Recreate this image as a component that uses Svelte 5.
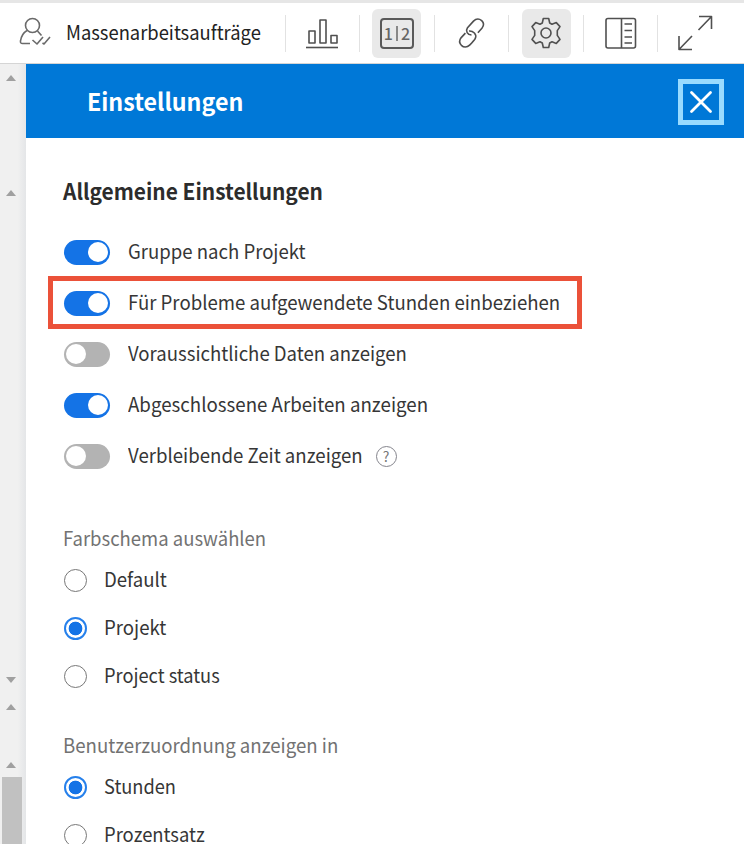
<script>
  let toggles = $state([
    { label: 'Gruppe nach Projekt', on: true, width: 178 },
    { label: 'Für Probleme aufgewendete Stunden einbeziehen', on: true, width: 432, marked: true },
    { label: 'Voraussichtliche Daten anzeigen', on: false, width: 279 },
    { label: 'Abgeschlossene Arbeiten anzeigen', on: true, width: 300 },
    { label: 'Verbleibende Zeit anzeigen', on: false, width: 235, help: true },
  ]);
  let groups = $state([
    {
      title: 'Farbschema auswählen', width: 203, selected: 'Projekt',
      options: [
        { label: 'Default', width: 63 },
        { label: 'Projekt', width: 62 },
        { label: 'Project status', width: 116 },
      ],
    },
    {
      title: 'Benutzerzuordnung anzeigen in', width: 275, selected: 'Stunden',
      options: [
        { label: 'Stunden', width: 72 },
        { label: 'Prozentsatz', width: 101 },
      ],
    },
  ]);

  // Condenses a label horizontally so that it takes exactly the given width.
  function fit(node, width) {
    const natural = node.offsetWidth;
    node.style.transform = `scaleX(${width / natural})`;
    node.style.marginRight = `${width - natural}px`;
  }
</script>

<div class="app">
  <header class="toolbar">
    <div class="bulk">
      <svg width="34" height="34" viewBox="0 0 34 34">
        <circle cx="15.5" cy="9.5" r="7" />
        <path d="M10 14.5C6 17 4 21 3.500 25q-.4 2.500 2 2.500h7.500M20.500 15l4 4.500" />
        <path d="M15.500 24l4.500 4 6-7M25.500 27l1.500 1 6-7" />
      </svg>
      <span class="text" use:fit={195}>Massenarbeitsaufträge</span>
    </div>
    <div class="tool"><svg width="34" height="34" viewBox="0 0 34 34"><path d="M1 31.500h32" /><path d="M4 15h6v12H4zM15 4h6v23h-6zM26 19.500h6V27h-6z" /></svg></div>
    <div class="tool"><div class="active"><div class="numbers"><span>1</span><i></i><span>2</span></div></div></div>
    <div class="tool">
      <svg class="link" width="34" height="34" viewBox="0 0 34 34">
        <path d="M18.500 19c-4-.2-6.300-4-4-7.200l6-6.700c2.600-2.600 5.800-2.500 8.200-.5 2.300 2.200 2 5.400.2 7.700l-4 4.400" />
        <path d="M16 15c4-.4 8.200 3.500 6.300 7.300-.7 1.500-4.300 5.400-5.700 6.800-2.600 2.500-6 2.300-8.200.2-2.300-2.300-2.100-5.200-.2-7.700l4.200-4.500" />
      </svg>
    </div>
    <div class="tool"><div class="active">
      <svg width="34" height="34" viewBox="0 0 34 34">
        <path d="M14.300 2.500h5.400l1 4.500 2.300 1.200 4.300-1.600 3.700 4-2.700 4v4.800l2.700 4-3.700 4-4.300-1.600-2.300 1.200-1 4.500h-5.400l-1-4.500L11 25.800l-4.300 1.600-3.700-4 2.700-4v-4.800l-2.700-4 3.700-4L11 8.200 13.300 7z" />
        <circle cx="17" cy="17" r="5" />
      </svg>
    </div></div>
    <div class="tool"><svg width="34" height="34" viewBox="0 0 34 34"><rect x="2" y="2.500" width="29.500" height="29.500" rx="2" /><path d="M17.500 2.500V32M20.500 8H28M20.500 14.500H28M20.500 21H28M20.500 27H28" /></svg></div>
    <div class="tool"><svg width="36" height="36" viewBox="0 0 36 36"><path d="M21.500 15L34.500 1.500M22 1.500h12.500v12.500M15 21L2 34.500M2 21v13.500h13" /></svg></div>
  </header>

  <div class="body">
    <aside class="rail">
      <i class="up first"></i>
      <i class="up second"></i>
      <i class="down"></i>
      <i class="up third"></i>
      <i class="up fourth"></i>
      <div class="thumb"></div>
    </aside>
    <main class="panel">
      <div class="title">
        <h1><span class="text" use:fit={156}>Einstellungen</span></h1>
        <button class="close" aria-label="Schließen"><svg width="24" height="24" viewBox="0 0 24 24"><path d="M2.500 2.500l19 19M21.500 2.500l-19 19" /></svg></button>
      </div>
      <div class="content">
        <h2><span class="text" use:fit={260}>Allgemeine Einstellungen</span></h2>
        <div class="toggles">
          {#each toggles as t}
            <div class="row" class:marked={t.marked}>
              <button class="switch" class:on={t.on} role="switch" aria-checked={t.on} aria-label={t.label} onclick={() => (t.on = !t.on)}><i></i></button>
              <span class="text" use:fit={t.width}>{t.label}</span>
              {#if t.help}<span class="help">?</span>{/if}
            </div>
          {/each}
        </div>
        {#each groups as g}
          <section>
            <h3><span class="text" use:fit={g.width}>{g.title}</span></h3>
            {#each g.options as o}
              <div class="option">
                <button class="radio" class:on={g.selected === o.label} role="radio" aria-checked={g.selected === o.label} aria-label={o.label} onclick={() => (g.selected = o.label)}></button>
                <span class="text" use:fit={o.width}>{o.label}</span>
              </div>
            {/each}
          </section>
        {/each}
      </div>
    </main>
  </div>
</div>

<style>
  :global(body) { margin: 0; overflow: hidden; }
  .app {
    width: 744px; height: 844px; overflow: hidden; box-sizing: border-box;
    display: flex; flex-direction: column; background: #fff; color: #363636;
    font: 19.5px/28px "Noto Sans CJK SC", "Noto Sans", sans-serif;
  }
  button { padding: 0; border: 0; margin: 0; box-sizing: border-box; flex: none; }
  h1, h2, h3 { margin: 0; }
  .text { display: inline-block; white-space: nowrap; transform-origin: 0 50%; }
  .toolbar {
    flex: none; height: 64px; box-sizing: border-box; display: flex; align-items: center;
    border-top: 3px solid #e6e6e6; border-bottom: 1px solid #d5d5d5;
  }
  .toolbar svg { fill: none; stroke: #505050; stroke-width: 1.6; stroke-linejoin: round; }
  .toolbar .link { margin-right: 2px; }
  .bulk { width: 284.500px; height: 60px; box-sizing: border-box; padding-left: 17px; display: flex; align-items: center; gap: 14.500px; color: #222; }
  .bulk svg { stroke: #6a6a6a; }
  .bulk .text { margin-bottom: 2px; }
  .tool { width: 74.600px; height: 37px; box-sizing: border-box; flex: none; border-left: 1px solid #e2e2e2; display: flex; align-items: center; justify-content: center; }
  .active { width: 49px; height: 49px; flex: none; border-radius: 6px; background: #e9e9e9; display: flex; align-items: center; justify-content: center; }
  .numbers {
    width: 34px; height: 31px; box-sizing: border-box; border: 2px solid #5a5a5a; border-radius: 4px;
    display: flex; align-items: center; justify-content: center; gap: 3px; font-size: 16px; line-height: 20px; font-weight: 500; color: #666;
  }
  .numbers i { width: 2px; height: 15px; background: #888; }
  .body { flex: 1; min-height: 0; display: flex; }
  .rail {
    width: 26px; box-sizing: border-box; flex: none; background: linear-gradient(90deg, #f0f0f0 68%, #e4e6e8);
    display: flex; flex-direction: column; align-items: flex-start; padding-left: 6px;
  }
  .rail i { width: 0; flex: none; border: 5.500px solid transparent; border-top: 0; border-bottom: 6px solid #a0a0a0; }
  .rail .down { border-bottom: 0; border-top: 6px solid #a0a0a0; margin-top: 481px; }
  .rail .first { margin-top: 11px; }
  .rail .second { margin-top: 109px; }
  .rail .third { margin-top: 21px; }
  .rail .fourth { margin-top: 52px; }
  .thumb { flex: none; width: 20px; height: 70px; margin: 9px 0 0 -4.500px; background: #c1c1c1; }
  .panel { flex: 1; min-width: 0; }
  .title { height: 74px; background: #0078d7; display: flex; align-items: center; justify-content: space-between; padding: 0 20px 0 60.500px; }
  h1 { font-size: 24px; line-height: 34px; font-weight: 700; color: #fff; }
  .close { width: 46px; height: 46px; margin-top: 2px; border: 5px solid #99dbff; background: #0078d7; display: flex; align-items: center; justify-content: center; }
  .close svg { fill: none; stroke: #fff; stroke-width: 2.800; stroke-linecap: round; }
  .content { padding: 35px 0 0 36.500px; }
  h2 { font-size: 22px; line-height: 34px; height: 34px; font-weight: 600; color: #2c2c2c; }
  .toggles { padding-top: 19px; }
  .row { position: relative; height: 51px; display: flex; align-items: center; padding-left: 1px; }
  .row .text { margin: 0 0 2px 18px; }
  .row.marked .text { margin-bottom: 1px; }
  .marked::after { content: ""; position: absolute; left: -14.500px; top: -1px; width: 534px; height: 53px; box-sizing: border-box; border: 5px solid #eb5139; pointer-events: none; }
  .switch { width: 46px; height: 25px; margin-top: 1px; border-radius: 13px; background: #b3b3b3; padding: 0 2px; display: flex; align-items: center; }
  .switch.on { background: #1473e6; justify-content: flex-end; }
  .switch i { width: 20px; height: 20px; border-radius: 50%; background: #fff; }
  .help { width: 21px; height: 21px; box-sizing: border-box; border: 1px solid #84848c; border-radius: 50%; margin: 2px 0 0 13.500px; font-size: 14px; line-height: 19px; text-align: center; color: #777; }
  section { height: 207px; padding-top: 43px; box-sizing: border-box; }
  h3 { height: 28px; line-height: 28px; font-size: 19.5px; font-weight: 400; color: #727272; margin-bottom: 4px; }
  .option { height: 48px; display: flex; align-items: center; gap: 17px; padding-left: 1px; box-sizing: border-box; }
  .option .text { margin-bottom: 2px; }
  .radio { width: 23px; height: 23px; margin-top: 1px; border: 1.800px solid #777; border-radius: 50%; background: #fff; }
  .radio.on { border: 2px solid #2680eb; background: radial-gradient(circle, #1473e6 6.500px, #fff 7.200px); }
</style>
